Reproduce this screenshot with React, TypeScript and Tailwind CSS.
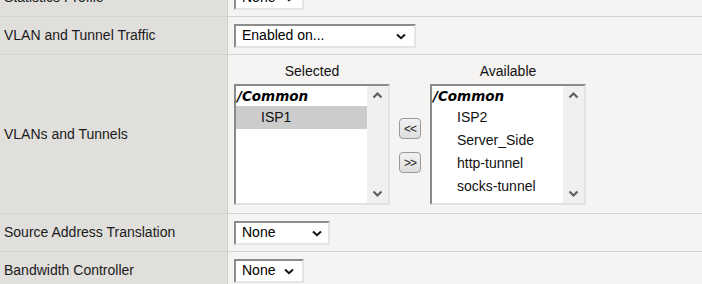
import React from "react";

const Chevron = ({ className = "" }: { className?: string }) => (
  <svg width="10" height="7" viewBox="0 0 10 7" className={className}>
    <path d="M1 1.5 L5 5.2 L9 1.5" fill="none" stroke="#111" strokeWidth="2" />
  </svg>
);

const Select = ({ value, width, chevronRight }: { value: string; width: string; chevronRight: string }) => (
  <div
    className={`${width} h-[24px] bg-white border-2 border-t-[#8c8c8c] border-l-[#8c8c8c] border-b-[#e4e4e4] border-r-[#e4e4e4] flex items-center relative text-[14px] text-black pl-[6px]`}
  >
    <span>{value}</span>
    <Chevron className={`absolute ${chevronRight} top-[7px]`} />
  </div>
);

const Row = ({ label, children, h = "h-[37px]" }: { label: string; children?: React.ReactNode; h?: string }) => (
  <div className="flex border-b border-[#d3d3d3]">
    <div className={`w-[228px] shrink-0 ${h} bg-[#e0dfdc] border-r border-[#cfcfcf] flex items-center pl-[4px] text-[14px] text-[#1a1a1a]`}>
      {label}
    </div>
    <div className={`flex-1 ${h} flex items-center pl-[6px]`}>{children}</div>
  </div>
);

const ScrollArrow = ({ up }: { up?: boolean }) => (
  <svg width="11" height="8" viewBox="0 0 11 8">
    <path d={up ? "M1.5 6.5 L5.5 2.5 L9.5 6.5" : "M1.5 1.5 L5.5 5.5 L9.5 1.5"} fill="none" stroke="#5f5f5f" strokeWidth="2.2" />
  </svg>
);

const ListBox = ({ items, selected }: { items: string[]; selected?: string }) => (
  <div className="w-[156px] h-[121px] border-2 border-t-[#8a8a8a] border-l-[#8a8a8a] border-b-[#e2e2e2] border-r-[#e2e2e2] bg-white flex">
    <div className="flex-1 flex flex-col">
      <div className="h-[20px] flex items-center pl-[1px] text-[13.5px] font-bold italic text-black" style={{ fontFamily: "'DejaVu Sans', sans-serif" }}>
        /Common
      </div>
      {items.map((it) => (
        <div
          key={it}
          className={`h-[23px] flex items-center pl-[25px] text-[14px] text-[#111] ${it === selected ? "bg-[#cccccc]" : ""}`}
        >
          {it}
        </div>
      ))}
    </div>
    <div className="w-[21px] bg-[#f0f0f0] flex flex-col items-center justify-between pt-[5px] pb-[5px]">
      <ScrollArrow up />
      <ScrollArrow />
    </div>
  </div>
);

const MoveBtn = ({ label }: { label: string }) => (
  <div className="w-[22px] h-[21px] rounded-[4px] border border-[#9a9a9a] bg-gradient-to-b from-[#f2f2f2] to-[#dedede] flex items-center justify-center text-[12px] text-[#222] leading-none tracking-[-1px]">
    {label}
  </div>
);

export default function App() {
  return (
    <div className="w-[702px] h-[284px] overflow-hidden bg-[#f5f4f2]" style={{ fontFamily: "'Liberation Sans', Arial, sans-serif" }}>
      <div className="-mt-[21px]">
        <Row label="Statistics Profile">
          <Select value="None" width="w-[70px]" chevronRight="right-[8px]" />
        </Row>
        <Row label="VLAN and Tunnel Traffic">
          <Select value="Enabled on..." width="w-[182px]" chevronRight="right-[8px]" />
        </Row>
        <div className="flex border-b border-[#d3d3d3]">
          <div className="w-[228px] shrink-0 h-[158px] bg-[#e0dfdc] border-r border-[#cfcfcf] flex items-center pl-[4px] text-[14px] text-[#1a1a1a]">
            VLANs and Tunnels
          </div>
          <div className="flex-1 h-[158px] flex items-start pl-[6px] pt-[8px]">
            <div className="flex flex-col items-center">
              <div className="h-[17px] leading-[17px] text-[14px] text-[#111]">Selected</div>
              <div className="mt-[4px]">
                <ListBox items={["ISP1"]} selected="ISP1" />
              </div>
            </div>
            <div className="flex flex-col gap-[13px] mx-[9px] mt-[55px]">
              <MoveBtn label="<<" />
              <MoveBtn label=">>" />
            </div>
            <div className="flex flex-col items-center">
              <div className="h-[17px] leading-[17px] text-[14px] text-[#111]">Available</div>
              <div className="mt-[4px]">
                <ListBox items={["ISP2", "Server_Side", "http-tunnel", "socks-tunnel"]} />
              </div>
            </div>
          </div>
        </div>
        <Row label="Source Address Translation">
          <Select value="None" width="w-[96px]" chevronRight="right-[6px]" />
        </Row>
        <Row label="Bandwidth Controller">
          <Select value="None" width="w-[70px]" chevronRight="right-[8px]" />
        </Row>
      </div>
    </div>
  );
}
